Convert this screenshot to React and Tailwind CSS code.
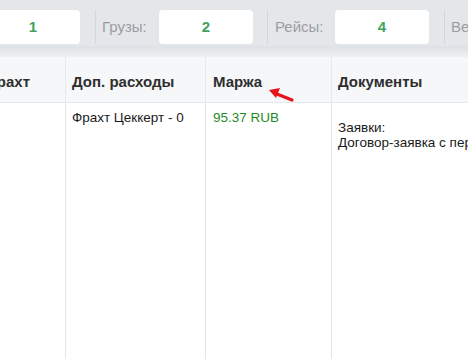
export default function App() {
  return (
    <div className="w-[468px] h-[359px] overflow-hidden bg-white relative font-['Liberation_Sans',Arial,sans-serif]">
      {/* stats bar */}
      <div className="h-[46px] bg-[#e4e7ea] flex items-start pt-[10px] text-[15px] overflow-hidden">
        <div className="shrink-0 ml-[-14px] w-[94px] h-[34px] bg-white rounded-[4px] flex items-center justify-center font-bold text-[#3fa35f]">1</div>
        <div className="shrink-0 ml-[15px] w-px h-[34px] bg-[#d3d7db]" />
        <div className="shrink-0 w-[63px] h-[34px] pl-[6px] flex items-center text-[#9a9da1]">Грузы:</div>
        <div className="shrink-0 w-[94px] h-[34px] bg-white rounded-[4px] flex items-center justify-center font-bold text-[#3fa35f]">2</div>
        <div className="shrink-0 ml-[14px] w-px h-[34px] bg-[#d3d7db]" />
        <div className="shrink-0 w-[67px] h-[34px] pl-[7px] flex items-center text-[#9a9da1]">Рейсы:</div>
        <div className="shrink-0 w-[94px] h-[34px] bg-white rounded-[4px] flex items-center justify-center font-bold text-[#3fa35f]">4</div>
        <div className="shrink-0 ml-[15px] w-px h-[34px] bg-[#d3d7db]" />
        <div className="shrink-0 pl-[6px] h-[34px] flex items-center text-[#9a9da1] whitespace-nowrap">Вес:</div>
      </div>
      <div className="h-[11px] bg-gradient-to-b from-[#dde1e5] to-[#eef0f2]" />

      {/* table header */}
      <div className="flex h-[46px] bg-[#f6f7f9] border-b border-[#e6e8eb] text-[15px] font-bold text-[#2e2e2e]">
        <div className="shrink-0 w-[65px] flex items-center pt-[5px] overflow-hidden whitespace-nowrap">
          <span className="ml-[-16px]">Фрахт</span>
        </div>
        <div className="shrink-0 w-[140px] border-l border-[#e6e8eb] flex items-center pt-[5px] pl-[6px]">Доп. расходы</div>
        <div className="shrink-0 w-[126px] border-l border-[#e6e8eb] flex items-center pt-[5px] pl-[7px]">Маржа</div>
        <div className="flex-1 border-l border-[#e6e8eb] flex items-center pt-[5px] pl-[6px] whitespace-nowrap">Документы</div>
      </div>

      {/* table body */}
      <div className="flex h-[260px] text-[13.5px] leading-[15px] text-[#1a1a1a]">
        <div className="shrink-0 w-[65px]" />
        <div className="shrink-0 w-[140px] border-l border-[#e3e5e8] pl-[6px] pt-[7px]">Фрахт Цеккерт - 0</div>
        <div className="shrink-0 w-[126px] border-l border-[#e3e5e8] pl-[7px] pt-[7px] text-[#1f8a1f]">95.37 RUB</div>
        <div className="flex-1 border-l border-[#e3e5e8] pl-[6px] pt-[17px] whitespace-nowrap overflow-hidden">
          <div>Заявки:</div>
          <div>Договор-заявка с перевозчиком</div>
        </div>
      </div>

      {/* annotation arrow */}
      <svg className="absolute left-[264px] top-[84px]" width="34" height="22" viewBox="0 0 34 22">
        <line x1="28" y1="16" x2="13" y2="10" stroke="#e8141c" strokeWidth="3.2" strokeLinecap="round" />
        <polygon points="5,6 16,4 12,14" fill="#e8141c" />
      </svg>
    </div>
  );
}
